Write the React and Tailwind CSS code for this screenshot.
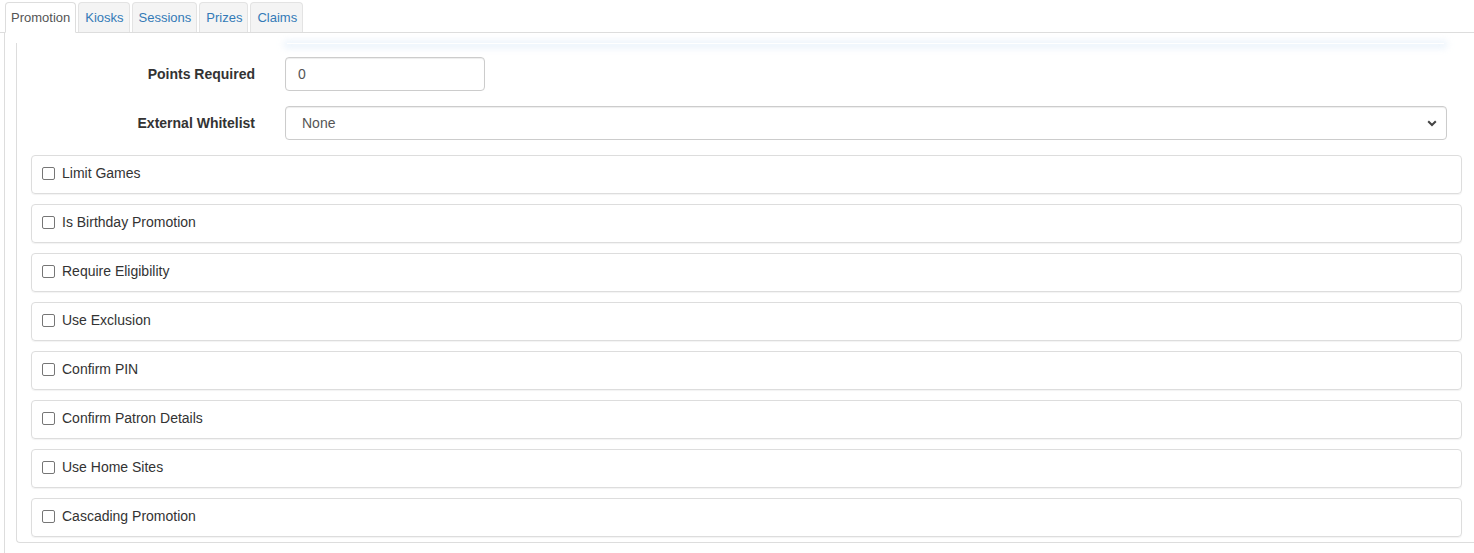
import React from 'react';

const tabs = ['Promotion', 'Kiosks', 'Sessions', 'Prizes', 'Claims'];

const options = [
  'Limit Games',
  'Is Birthday Promotion',
  'Require Eligibility',
  'Use Exclusion',
  'Confirm PIN',
  'Confirm Patron Details',
  'Use Home Sites',
  'Cascading Promotion',
];

export default function App() {
  const fontStack = "'Liberation Sans', Arial, Helvetica, sans-serif";

  return (
    <div style={{ fontFamily: fontStack }} className="w-[1474px] h-[553px] overflow-hidden bg-white text-[#333] text-[14px]">
      {/* tabs */}
      <ul className="flex gap-[2px] pt-[2px] pl-[5px] border-b border-[#ddd] h-[33px]">
        {tabs.map((t, i) => (
          <li
            key={t}
            className={
              i === 0
                ? 'h-[31px] px-[5px] flex items-center text-[13px] text-[#555] bg-white border border-[#ddd] border-b-white rounded-t-[4px] -mb-px'
                : 'h-[30px] pl-[6px] pr-[5px] flex items-center text-[13px] text-[#337ab7] bg-[#f4f4f4] border border-[#e3e3e3] border-b-0 rounded-t-[4px]'
            }
          >
            {t}
          </li>
        ))}
      </ul>

      {/* tab body */}
      <div className="ml-[4px] border-l border-[#ddd] pl-[11px] pt-[10px] h-[520px]">
        <div className="border-l border-b border-[#ddd] rounded-bl-[4px] pl-[14px] pr-[12px] pb-[5px] relative">
          {/* bottom of section scrolled out of view */}
          <div className="ml-[256px] mr-[18px] h-px shadow-[0_1px_7px_3px_rgba(200,222,245,0.4)]" />

          <div className="pt-[13px]">
            <div className="flex items-center mb-[15px]">
              <label className="w-[224px] text-right font-bold">Points Required</label>
              <input
                readOnly
                value="0"
                className="ml-[30px] w-[200px] h-[34px] px-[12px] text-[14px] text-[#555] border border-[#ccc] rounded-[4px] shadow-[inset_0_1px_1px_rgba(0,0,0,0.075)] outline-none"
              />
            </div>

            <div className="flex items-center mb-[15px]">
              <label className="w-[224px] text-right font-bold">External Whitelist</label>
              <div className="ml-[30px] flex-1 mr-[15px] h-[34px] pl-[16px] pr-[8px] flex items-center justify-between text-[#555] border border-[#ccc] rounded-[4px] shadow-[inset_0_1px_1px_rgba(0,0,0,0.075)]">
                <span>None</span>
                <svg width="10" height="7" viewBox="0 0 10 7" className="mr-[1px]">
                  <path d="M1.2 1.2 L5 5 L8.8 1.2" fill="none" stroke="#444" strokeWidth="2" />
                </svg>
              </div>
            </div>

            {options.map((o) => (
              <div
                key={o}
                className="h-[39px] mb-[10px] last:mb-0 pb-[2px] border border-[#ddd] rounded-[4px] shadow-[0_1px_1px_rgba(0,0,0,0.05)] flex items-center pl-[10px]"
              >
                <span className="w-[13px] h-[13px] border border-[#767676] rounded-[2px] bg-white" />
                <span className="ml-[7px]">{o}</span>
              </div>
            ))}
          </div>
        </div>
      </div>
    </div>
  );
}
